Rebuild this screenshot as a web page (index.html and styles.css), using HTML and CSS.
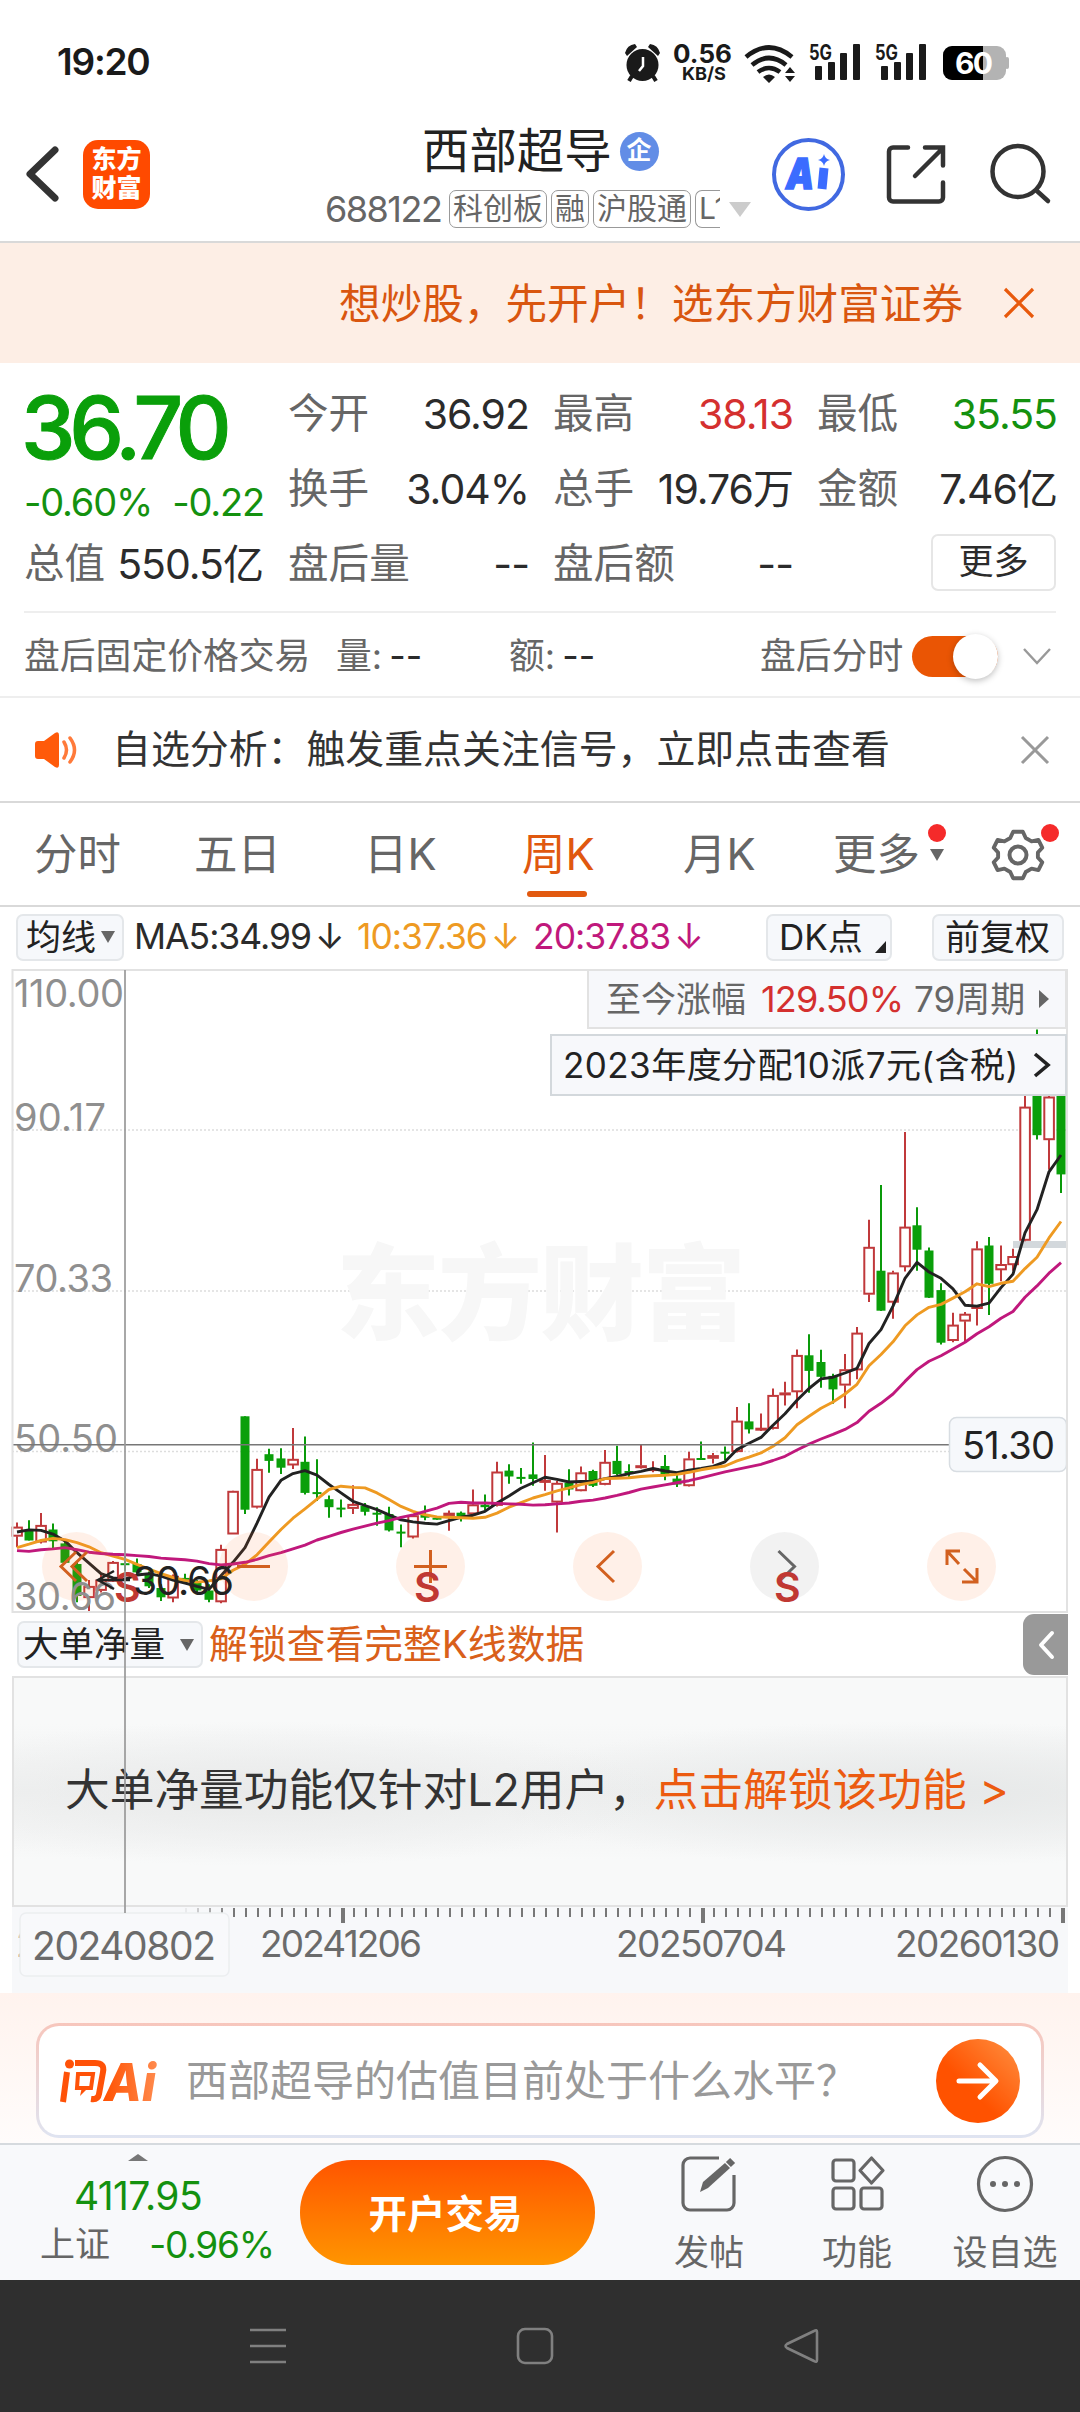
FILE: index.html
```
<!DOCTYPE html>
<html lang="zh-CN">
<head>
	<meta charset="UTF-8">
	<title>西部超导 688122</title>
	<link rel="stylesheet" href="styles.css">
</head>
<body>
	<div class="status">
		<span class="time">19:20</span>
		<svg class="status-icons" width="380" height="60" viewBox="640 30 380 60">
			<g fill="#1a1a1a">
				<circle cx="642.5" cy="65" r="16"/>
				<path d="M625 53a12 12 0 0 1 10-9l2 3-10 9zM660 53a12 12 0 0 0-10-9l-2 3 10 9z"/>
				<path d="M632 76l-3 5M653 76l3 5" stroke="#1a1a1a" stroke-width="4"/>
				<path d="M643 57v9l-4 5" stroke="#fff" stroke-width="2.5" fill="none"/>
				<text x="673" y="63" font-size="26" font-weight="700" textLength="59">0.56</text>
				<text x="682" y="80" font-size="18" font-weight="700" textLength="44" lengthAdjust="spacingAndGlyphs">KB/S</text>
				<g fill="none" stroke="#1a1a1a" stroke-width="4.6">
					<path d="M746 57q23-19 46 0M752 65q17-14 34 0M758 72q11-8 22 0"/>
				</g>
				<path d="M763 77q6-5 12 0l-6 6zM785 73l5-6 5 6zM785 76h10l-5 6z"/>
				<text x="809" y="60" font-size="21" font-weight="700" textLength="23" lengthAdjust="spacingAndGlyphs">5G</text>
				<text x="875" y="60" font-size="21" font-weight="700" textLength="23" lengthAdjust="spacingAndGlyphs">5G</text>
				<rect x="815" y="66" width="7" height="14" rx="1"/><rect x="828" y="62" width="7" height="18" rx="1"/><rect x="840" y="53" width="7" height="27" rx="1"/><rect x="853" y="44" width="7" height="36" rx="1"/>
				<rect x="881" y="66" width="7" height="14" rx="1"/><rect x="894" y="62" width="7" height="18" rx="1"/><rect x="906" y="53" width="7" height="27" rx="1"/><rect x="919" y="44" width="7" height="36" rx="1"/>
			</g>
			<rect x="943" y="46" width="63" height="34" rx="9" fill="#b3b3b3"/>
			<rect x="1005" y="57" width="4" height="12" rx="2" fill="#b3b3b3"/>
			<path d="M983 46h-31a9 9 0 0 0-9 9v16a9 9 0 0 0 9 9h31z" fill="#000"/>
			<text x="955" y="74" font-size="30" font-weight="700" fill="#fff" textLength="38">60</text>
		</svg>
	</div>

	<div class="header">
		<svg class="back" width="36" height="60" viewBox="0 0 36 60"><path d="M30 6L5 30l25 24" fill="none" stroke="#333" stroke-width="7" stroke-linecap="round" stroke-linejoin="round"/></svg>
		<div class="logo">东方<br>财富</div>
		<div class="title">
			<div class="name">西部超导<span class="qi">企</span></div>
			<div class="tags">
				<span class="code">688122</span>
				<span class="tag">科创板</span>
				<span class="tag">融</span>
				<span class="tag">沪股通</span>
				<span class="tag cut">L1</span>
				<i class="tri"></i>
			</div>
		</div>
		<svg class="tools" width="290" height="80" viewBox="768 134 290 80" fill="none" stroke="#333" stroke-width="4.5">
			<circle cx="808.500" cy="174.500" r="34.500" stroke="#4169e1" stroke-width="4"/>
			<text x="786" y="189" font-size="42" font-weight="900" font-style="italic" fill="#3b6cff" stroke="#3b6cff" stroke-width="1.500" textLength="28" lengthAdjust="spacingAndGlyphs">A</text>
			<path d="M824 168l-2 21" stroke="#3b6cff" stroke-width="9"/>
			<path d="M824 154q1 5 6 6-5 1-6 6-1-5-6-6 5-1 6-6z" fill="#3b6cff" stroke="none"/>
			<path d="M908 147.500h-15a4 4 0 0 0-4 4v46a4 4 0 0 0 4 4h46a4 4 0 0 0 4-4v-15M925 147.500h18v18M942 149l-27 27" stroke-linecap="round"/>
			<circle cx="1018" cy="171.500" r="25.500"/>
			<path d="M1037 191l11 10" stroke-linecap="round"/>
		</svg>
	</div>

	<div class="banner">
		<span>想炒股，先开户！选东方财富证券</span>
		<svg width="34" height="34" viewBox="0 0 34 34"><path d="M3 3l28 28M31 3L3 31" stroke="#e8590c" stroke-width="3.200"/></svg>
	</div>

	<div class="quote">
		<div class="price-col">
			<div class="price">36.70</div>
			<div class="change"><span>-0.60%</span><span>-0.22</span></div>
			<div class="cell cap"><label>总值</label><b>550.5亿</b></div>
		</div>
		<div class="grid">
			<div class="cell"><label>今开</label><b>36.92</b></div>
			<div class="cell"><label>最高</label><b class="red">38.13</b></div>
			<div class="cell"><label>最低</label><b class="green">35.55</b></div>
			<div class="cell"><label>换手</label><b>3.04%</b></div>
			<div class="cell"><label>总手</label><b>19.76万</b></div>
			<div class="cell"><label>金额</label><b>7.46亿</b></div>
			<div class="cell"><label>盘后量</label><b>--</b></div>
			<div class="cell"><label>盘后额</label><b>--</b></div>
			<div class="cell end"><span class="more-btn">更多</span></div>
		</div>
	</div>

	<div class="after">
		<span class="after-title">盘后固定价格交易</span>
		<span class="after-vol">量: <b>--</b></span>
		<span class="after-amt">额: <b>--</b></span>
		<span>盘后分时</span>
		<i class="switch"></i>
		<svg width="30" height="20" viewBox="0 0 30 20"><path d="M2 2l13 14L28 2" fill="none" stroke="#999" stroke-width="2.400"/></svg>
	</div>

	<div class="notice">
		<svg width="46" height="38" viewBox="0 0 46 38"><path d="M2 13q0-3 3-3h6l11-8q4-2 4 2v30q0 4-4 2l-11-8H5q-3 0-3-3z" fill="#ff5a0a"/><path d="M31 11q5 8 0 16M37 7q9 12 0 24" fill="none" stroke="#ff7a3a" stroke-width="3.500" stroke-linecap="round"/></svg>
		<span>自选分析：触发重点关注信号，立即点击查看</span>
		<svg width="30" height="30" viewBox="0 0 30 30"><path d="M2 2l26 26M28 2L2 28" stroke="#999" stroke-width="3"/></svg>
	</div>

	<div class="tabs">
		<span>分时</span>
		<span>五日</span>
		<span>日K</span>
		<span class="on">周K</span>
		<span>月K</span>
		<span class="more">更多<i class="arrow"></i><i class="dot"></i></span>
		<span class="gear">
			<svg width="52" height="54" viewBox="-26 -27 52 54" fill="none" stroke="#666" stroke-width="4" stroke-linejoin="round">
				<path d="M-5-24H5L8-17.500 14-14 21-15.500 25-7.500 20.500-2.500V2.500L25 7.500 21 15.500 14 14 8 17.500 5 24H-5L-8 17.500-14 14-21 15.500-25 7.500-20.500 2.500V-2.500L-25-7.500-21-15.500-14-14-8-17.500Z" transform="scale(.97)"/>
				<circle r="8.500"/>
			</svg>
			<i class="dot"></i>
		</span>
	</div>

	<div class="ma">
		<span class="btn">均线<i class="arrow"></i></span>
		<span class="ma5">MA5:34.99<em>↓</em></span>
		<span class="ma10">10:37.36<em>↓</em></span>
		<span class="ma20">20:37.83<em>↓</em></span>
		<span class="btn dk">DK点<i></i></span>
		<span class="btn fq">前复权</span>
	</div>

	<div class="chart-area">
		<svg class="kline" width="1056" height="644" viewBox="12 0 1056 644">
			<path d="M12 161H1067M12 322H1067M12 482.500H1067" stroke="#ddd" stroke-width="1.500" stroke-dasharray="2 2"/>
			<text class="mark" x="336" y="363" textLength="410">东方财富</text>
			<g class="axis">
				<text x="14" y="38" textLength="110">110.00</text>
				<text x="14" y="162" textLength="92">90.17</text>
				<text x="14" y="323" textLength="99">70.33</text>
				<text x="14" y="483" textLength="104">50.50</text>
			</g>
			<rect x="1013" y="272" width="54" height="7" fill="#d3d8dc"/>
			<g id="candles"></g>
			<g id="lines" fill="none" stroke-width="2.900" stroke-linejoin="round"></g>
			<path d="M12 475.700H1067" stroke="#777" stroke-width="1.500"/>
			<g id="controls">
				<g class="hot"><circle cx="76.500" cy="597.500" r="34.500"/><circle cx="253.500" cy="597.500" r="34.500"/><circle cx="430.500" cy="597.500" r="34.500"/><circle cx="607.500" cy="597.500" r="34.500"/><circle cx="961.500" cy="597.500" r="34.500"/></g>
				<circle cx="784.500" cy="597.500" r="34.500" fill="#8a8a8a" fill-opacity=".11"/>
				<g fill="none" stroke="#d2601f" stroke-width="3">
					<path d="M76 583L61 597.500 76 612M87 583L72 597.500 87 612"/>
					<path d="M237 597.500h33M414 597.500h33M430.500 581v33"/>
					<path d="M614 582l-16 15.500 16 15.500"/>
					<path d="M960 582h-13v14M947 582l12 13M977 599v14h-15M977 613l-13-13"/>
				</g>
				<path d="M778.500 582l16 15.500-16 15.500" fill="none" stroke="#666" stroke-width="3"/>
			</g>
			<g class="axis"><text x="14" y="641" textLength="102">30.66</text></g>
			<g class="sell"><text x="114" y="633">S</text><text x="414" y="633">S</text><text x="774" y="633">S</text></g>
			<path d="M114 602l-16 9 16 9M98 611h32" fill="none" stroke="#222" stroke-width="2.500"/>
			<text x="133" y="626" font-size="39" fill="#222" textLength="101">30.66</text>
			<rect x="949.500" y="448.500" width="117" height="54" rx="7" fill="#f6f8fb" stroke="#d8dde2" stroke-width="1.500"/>
			<text x="962" y="490" font-size="38" fill="#222" textLength="93">51.30</text>
			<rect x="12.500" y="1" width="1054.500" height="642" fill="none" stroke="#e2e2e2" stroke-width="2"/>
		</svg>
		<div class="tip gain"><span>至今涨幅</span><b>129.50%</b><span>79周期</span><i></i></div>
		<div class="tip dividend"><span>2023年度分配10派7元(含税)</span><svg width="18" height="26" viewBox="0 0 18 26"><path d="M2 2l13 11L2 24" fill="none" stroke="#222" stroke-width="3.600"/></svg></div>

		<div class="sub">
			<span class="btn">大单净量<i class="arrow"></i></span>
			<span class="unlock">解锁查看完整K线数据</span>
			<span class="handle"><svg width="18" height="32" viewBox="0 0 18 32"><path d="M15 4L4 16l11 12" fill="none" stroke="#fff" stroke-width="4" stroke-linecap="round" stroke-linejoin="round"/></svg></span>
		</div>
		<div class="locked">
			<span>大单净量功能仅针对L2用户，</span><a>点击解锁该功能 &gt;</a>
		</div>
		<svg class="dates" width="1056" height="86" viewBox="12 0 1056 86">
			<g id="ticks" fill="#777"></g>
			<text x="16" y="50">2</text>
			<text x="260" y="50" textLength="162">20241206</text>
			<text x="616" y="50" textLength="171">20250704</text>
			<text x="895" y="50" textLength="165">20260130</text>
			<rect x="20" y="6" width="209" height="63" rx="6" fill="#f8f9fb" stroke="#eceef0" stroke-width="1.500"/>
			<text class="current" x="32" y="53" textLength="184">20240802</text>
		</svg>
		<i class="cross"></i>
	</div>

	<div class="ask">
		<div class="ask-box">
			<svg width="100" height="50" viewBox="58 2055 100 50">
				<defs><linearGradient id="fire"><stop offset="0" stop-color="#ff5000"/><stop offset="1" stop-color="#ff8a4d"/></linearGradient></defs>
				<g fill="none" stroke="#ff5208" stroke-width="6">
					<path d="M67 2071l-4 30M75 2062h20q10 0 8 9l-4 22q-1 6-8 5"/>
					<path d="M78 2073h15l-2 14h-14z" stroke-width="4"/>
				</g>
				<circle cx="69.500" cy="2063" r="4.500" fill="#ff5208"/>
				<path d="M82 2086l-2 9 9-9" fill="#ff5208"/>
				<text x="104" y="2100" font-size="52" font-weight="800" font-style="italic" fill="url(#fire)" textLength="52" lengthAdjust="spacingAndGlyphs">Ai</text>
			</svg>
			<span class="hint">西部超导的估值目前处于什么水平？</span>
			<span class="go"><svg width="44" height="38" viewBox="0 0 44 38"><path d="M3 19h36M24 3l16 16-16 16" fill="none" stroke="#fff" stroke-width="5" stroke-linecap="round" stroke-linejoin="round"/></svg></span>
		</div>
	</div>

	<div class="bottom">
		<div class="index">
			<i class="up"></i>
			<b>4117.95</b>
			<p><span>上证</span><b>-0.96%</b></p>
		</div>
		<div class="open">开户交易</div>
		<div class="act">
			<svg width="60" height="60" viewBox="0 0 60 60" fill="none" stroke="#666" stroke-width="3.200"><path d="M40 4H11a7 7 0 0 0-7 7v38a7 7 0 0 0 7 7h37a7 7 0 0 0 7-7V21"/><path d="M21 38l3-10L46 9l5 5-22 20z" fill="#666" stroke="none"/><path d="M49 6l5 5" stroke-width="6"/></svg>
			<span>发帖</span>
		</div>
		<div class="act">
			<svg width="60" height="60" viewBox="0 0 60 60" fill="none" stroke="#666" stroke-width="3.200"><rect x="6" y="6" width="21" height="21" rx="3"/><rect x="6" y="34" width="21" height="21" rx="3"/><rect x="34" y="34" width="21" height="21" rx="3"/><path d="M44.500 4L56 16.500 44.500 29 33 16.500z" stroke-linejoin="round"/></svg>
			<span>功能</span>
		</div>
		<div class="act">
			<svg width="60" height="60" viewBox="0 0 60 60" fill="#666"><circle cx="30" cy="30" r="26.500" fill="none" stroke="#666" stroke-width="3.200"/><circle cx="18" cy="30" r="3"/><circle cx="30" cy="30" r="3"/><circle cx="42" cy="30" r="3"/></svg>
			<span>设自选</span>
		</div>
	</div>

	<div class="navbar">
		<svg width="38" height="38" viewBox="0 0 38 38"><path d="M1 3h36M1 19h36M1 35h36"/></svg>
		<svg width="38" height="38" viewBox="0 0 38 38"><rect x="2" y="2" width="34" height="34" rx="7"/></svg>
		<svg width="38" height="38" viewBox="0 0 38 38"><path d="M34 5v28q0 3-3 1L4 21q-3-2 0-4L31 4q3-2 3 1z"/></svg>
	</div>

	<script src="chart.js"></script>
</body>
</html>
```

FILE: chart.js
```
// up/down, high, body top, body bottom, low
const candles = [
	['r',1338,1349,1371,1397],['g',1333,1357,1381,1381],['r',1316,1345,1385,1388],['g',1341,1355,1383,1400],
	['g',1378,1388,1434,1434],['g',1430,1437,1513,1528],['r',1475,1490,1517,1553],['r',1460,1475,1500,1505],
	['r',1430,1433,1478,1480],['g',1415,1435,1437,1453],['g',1424,1437,1457,1460],['g',1455,1460,1490,1494],
	['g',1485,1494,1516,1525],['r',1462,1466,1518,1528],['g',1460,1470,1473,1483],['g',1475,1480,1500,1505],
	['g',1485,1500,1522,1528],['r',1391,1402,1527,1530],['r',1263,1264,1366,1366],['g',1086,1086,1308,1318],
	['r',1187,1212,1302,1305],['g',1163,1176,1192,1220],['g',1162,1186,1208,1223],['r',1114,1188,1202,1211],
	['g',1134,1194,1268,1272],['g',1188,1266,1269,1287],['g',1274,1283,1302,1327],['g',1284,1303,1305,1326],
	['r',1250,1295,1305,1318],['g',1292,1299,1313,1322],['g',1302,1315,1319,1346],['g',1301,1318,1357,1360],
	['g',1343,1360,1364,1397],['r',1318,1322,1373,1376],['g',1298,1320,1327,1333],['g',1325,1327,1331,1332],
	['r',1310,1316,1323,1358],['g',1312,1315,1325,1336],['r',1260,1296,1318,1320],['g',1272,1296,1302,1310],
	['r',1194,1218,1298,1300],['g',1200,1215,1229,1246],['g',1209,1230,1233,1246],['g',1148,1224,1235,1251],
	['r',1178,1238,1241,1263],['r',1240,1245,1290,1362],['g',1212,1244,1260,1274],['r',1205,1220,1263,1264],
	['g',1213,1216,1251,1254],['r',1166,1195,1248,1250],['g',1156,1192,1223,1226],['g',1200,1216,1219,1232],
	['r',1154,1203,1207,1210],['r',1193,1210,1212,1219],['g',1178,1204,1224,1238],['g',1220,1234,1248,1254],
	['r',1170,1187,1251,1253],['g',1146,1185,1188,1190],['r',1173,1179,1186,1198],['g',1158,1170,1173,1190],
	['r',1064,1097,1170,1172],['g',1055,1098,1117,1127],['r',1079,1114,1118,1121],['r',1020,1036,1115,1117],
	['r',1004,1030,1033,1060],['r',927,941,1028,1067],['g',891,941,978,1030],['g',928,957,992,1018],
	['g',985,990,1022,1056],['r',938,975,1012,1067],['r',874,888,976,998],['r',619,684,796,814],
	['g',536,740,835,836],['r',740,745,815,854],['r',410,636,731,742],['g',589,632,690,740],
	['g',685,692,804,805],['g',770,786,911,915],['r',840,869,906,910],['r',838,843,860,910],
	['r',670,688,830,870],['g',660,680,771,845],['r',680,725,738,765],['r',688,706,726,740],
	['r',300,351,668,670],['g',167,200,418,428],['r',315,327,429,500],['g',250,300,511,555]
];
const averages = {
	'#222': [1361,1356,1357,1366,1382,1410,1435,1460,1470,1473,1463,1460,1466,1475,1482,1490,1497,1465,1433,1398,1340,1278,1238,1222,1215,1226,1248,1268,1288,1298,1308,1320,1332,1337,1340,1342,1334,1326,1321,1312,1292,1275,1257,1244,1231,1236,1242,1241,1241,1234,1229,1222,1217,1210,1216,1220,1214,1210,1205,1194,1165,1150,1136,1107,1080,1048,1020,997,993,983,972,913,880,824,758,720,743,758,783,822,824,817,780,748,650,595,505,465],
	'#ee9a22': [1398,1390,1381,1376,1379,1386,1396,1410,1418,1426,1438,1449,1460,1469,1476,1480,1477,1472,1452,1438,1415,1385,1355,1328,1306,1283,1260,1252,1255,1256,1268,1284,1300,1312,1320,1325,1326,1327,1328,1326,1316,1302,1291,1280,1272,1263,1256,1248,1243,1234,1233,1232,1229,1227,1226,1224,1219,1213,1208,1204,1192,1183,1173,1157,1137,1106,1086,1067,1052,1033,1010,966,939,909,871,845,827,820,805,790,771,778,770,765,735,708,662,623],
	'#c0187c': [1405,1407,1403,1401,1398,1403,1409,1412,1414,1415,1417,1419,1423,1425,1427,1430,1436,1439,1437,1433,1426,1417,1410,1401,1392,1380,1371,1362,1354,1347,1340,1334,1326,1320,1312,1304,1293,1290,1292,1292,1293,1294,1295,1297,1296,1294,1292,1288,1285,1280,1274,1267,1259,1254,1249,1244,1239,1232,1225,1218,1212,1206,1200,1191,1181,1166,1152,1140,1129,1117,1101,1074,1055,1033,1003,975,955,942,926,910,890,873,853,837,803,776,746,721]
};
const x = i => 17 + i * 12;
const y = v => +((v - 23) * 643 / 1528).toFixed(1);

let html = '';
candles.forEach(([c, hi, top, bot, lo], i) => {
	const h = y(bot) - y(top);
	if (c === 'g') {
		html += `<path d="M${x(i)} ${y(hi)}V${y(lo)}" stroke="#0a9a0a" stroke-width="2"/>`;
		html += `<rect x="${x(i) - 4.5}" y="${y(top)}" width="9" height="${Math.max(h, 2)}" fill="#0a9f0a"/>`;
	} else {
		html += `<path d="M${x(i)} ${y(hi)}V${y(top)}M${x(i)} ${y(bot)}V${y(lo)}" stroke="#c0393b" stroke-width="2"/>`;
		html += `<rect x="${x(i) - 4.7}" y="${y(top) + 0.6}" width="9.6" height="${Math.max(h - 1.2, 1)}" fill="#fff" stroke="#c0393b" stroke-width="2"/>`;
	}
});
document.getElementById('candles').innerHTML = html;

html = '';
for (const color in averages) {
	html += `<polyline stroke="${color}" points="${averages[color].map((v, i) => x(i) + ',' + y(v)).join(' ')}"/>`;
}
document.getElementById('lines').innerHTML = html;

html = '';
for (let i = 0; i < 74; i++) {
	const major = [13, 43, 73].includes(i);
	html += `<rect x="${185 + i * 12}" y="1" width="${major ? 4 : 2}" height="${major ? 15 : 9}" opacity="${Math.min(1, 0.1 + i * 0.25)}"/>`;
}
document.getElementById('ticks').innerHTML = html;
```

FILE: styles.css
```
* {
	box-sizing: border-box;
}
body {
	margin: 0;
	width: 1080px;
	height: 2412px;
	overflow: hidden;
	background: #fff;
	color: #2b2b2b;
	font-family: Inter, "Noto Sans CJK SC", sans-serif;
	font-weight: 400;
	line-height: 1;
	white-space: nowrap;
}
b {
	font-weight: 400;
}
i, em {
	font-style: normal;
}
svg {
	display: block;
	flex: none;
	overflow: visible;
}
.green { color: #14910f; }
.red { color: #d4302f; }

/* status bar */
.status {
	height: 120px;
	padding: 0 60px 0 57px;
	display: flex;
	align-items: center;
	justify-content: space-between;
}
.time {
	padding-top: 3px;
	font-size: 37px;
	font-weight: 600;
	color: #1a1a1a;
	letter-spacing: -1.2px;
}

/* header */
.header {
	height: 123px;
	border-bottom: 2px solid #d9d9d9;
	display: flex;
	padding-left: 25px;
}
.back {
	margin-top: 24px;
}
.logo {
	width: 67px;
	height: 69px;
	margin: 20px 0 0 22px;
	padding-top: 5px;
	border-radius: 15px;
	background: #ff4a00;
	color: #fff;
	font-size: 25px;
	font-weight: 900;
	line-height: 29px;
	text-align: center;
}
.title {
	width: 428px;
	margin-left: 175px;
}
.name {
	height: 60px;
	padding: 2px 0 0 97px;
	font-size: 47.4px;
	line-height: 56px;
	display: flex;
	align-items: center;
	color: #222;
}
.qi {
	width: 39px;
	height: 39px;
	margin-left: 8px;
	border-radius: 50%;
	background: #628de6;
	color: #fff;
	font-size: 25px;
	font-weight: 700;
	line-height: 37px;
	text-align: center;
}
.tags {
	display: flex;
	align-items: center;
	margin-top: 10px;
	height: 38px;
	color: #666;
	font-size: 30px;
}
.code {
	width: 124px;
	font-size: 36px;
	letter-spacing: -1.5px;
}
.tag {
	height: 38px;
	margin-right: 4px;
	padding: 0 3px;
	border: 1.5px solid #999;
	border-radius: 7px;
	line-height: 34px;
}
.cut {
	width: 25px;
	margin-right: 9px;
	border-right: 0;
	border-radius: 7px 0 0 7px;
	overflow: hidden;
}
.tri {
	border: 11px solid transparent;
	border-top: 15px solid #ccc;
	border-bottom: 0;
}
.tools {
	margin: 14px 0 0 15px;
}

.banner {
	height: 120px;
	padding: 0 44px 0 0;
	background: #fdeee5;
	color: #d9560f;
	font-size: 41.6px;
	display: flex;
	align-items: center;
	justify-content: flex-end;
	gap: 39px;
}
.banner span {
	padding-top: 3px;
}

/* quote */
.quote {
	height: 250px;
	margin: 0 24px;
	border-bottom: 2px solid #eee;
	display: flex;
}
.price-col {
	width: 264px;
	padding: 22px 0 0 0;
}
.price {
	height: 85px;
	margin-left: -3px;
	font-size: 87px;
	font-weight: 500;
	line-height: 85px;
	letter-spacing: -6.3px;
	-webkit-text-stroke: 1px #0a9f0a;
	color: #0a9f0a;
}
.change {
	height: 58px;
	display: flex;
	align-items: center;
	justify-content: space-between;
	width: 240px;
	margin-top: 3px;
	font-size: 38px;
	letter-spacing: -1.2px;
	color: #14910f;
}
.grid {
	width: 768px;
	margin-top: 14px;
	display: grid;
	grid-template-columns: 240px 239px 239px;
	grid-auto-rows: 75px;
	column-gap: 25px;
}
.cell {
	display: flex;
	align-items: center;
	justify-content: space-between;
	font-size: 41px;
}
.cell label {
	color: #666;
	font-size: 40.6px;
}
.cell b {
	letter-spacing: -1px;
	margin-right: -1px;
}
.cell.cap {
	width: 238px;
	height: 75px;
	margin-top: -4px;
}
.cell.end {
	justify-content: flex-end;
}
.more-btn {
	width: 125px;
	height: 57px;
	margin: -5px 0 0;
	border: 2px solid #e6e6e6;
	border-radius: 7px;
	font-size: 35px;
	line-height: 51px;
	text-align: center;
}

.after {
	height: 85px;
	padding: 4px 27px 0 24px;
	border-bottom: 2px solid #eee;
	color: #666;
	font-size: 35.8px;
	display: flex;
	align-items: center;
}
.after b {
	margin-left: -3px;
	color: #2b2b2b;
}
.after-title { width: 312px; }
.after-vol { width: 173px; }
.after-amt { width: 251px; }
.switch {
	width: 86px;
	height: 41px;
	margin: 0 24px 0 9px;
	border-radius: 21px;
	background: #ea5504;
	position: relative;
}
.switch::after {
	content: "";
	position: absolute;
	right: 0;
	top: -2px;
	width: 45px;
	height: 45px;
	border-radius: 50%;
	background: #fff;
	box-shadow: 0 2px 6px rgba(0,0,0,.25);
}

.notice {
	height: 105px;
	padding: 0 30px 0 33px;
	border-bottom: 2px solid #d9d9d9;
	display: flex;
	align-items: center;
	font-size: 38.9px;
	color: #333;
}
.notice span {
	width: 908px;
	margin-left: 33px;
}

/* period tabs */
.tabs {
	height: 104px;
	padding-left: 34px;
	border-bottom: 2px solid #d9d9d9;
	display: grid;
	grid-template-columns: 160px 170px 158px 161px 150px 159px 60px;
	align-items: center;
	font-size: 43.4px;
	color: #666;
}
.tabs span {
	position: relative;
	top: 1px;
}
.tabs .on {
	color: #e0580f;
}
.tabs .on::after {
	content: "";
	position: absolute;
	left: 5px;
	top: 58px;
	width: 60px;
	height: 6px;
	border-radius: 3px;
	background: #e2590f;
}
.arrow {
	display: inline-block;
	border: 7px solid transparent;
	border-top: 12px solid #666;
	border-bottom: 0;
}
.more .arrow {
	position: absolute;
	left: 97px;
	top: 16px;
}
.dot {
	position: absolute;
	width: 18px;
	height: 18px;
	border-radius: 50%;
	background: #f52a2a;
	left: 95px;
	top: -9px;
}
.gear .dot {
	left: 49px;
	top: -4px;
}

.ma {
	height: 62px;
	padding: 0 16px 2px;
	display: flex;
	align-items: center;
	font-size: 35.5px;
	letter-spacing: -1px;
}
.ma em {
	margin-left: 4px;
}
.btn {
	height: 47px;
	border: 2px solid #e4e7ea;
	border-radius: 7px;
	background: #f6f8fb;
	color: #222;
	font-size: 35px;
	line-height: 41px;
	letter-spacing: 0;
	padding-left: 8px;
	display: flex;
	align-items: center;
}
.ma .btn { width: 108px; }
.ma .btn .arrow { margin-left: 5px; }
.ma5 { width: 223px; margin-left: 10px; }
.ma10 { width: 176px; color: #ee9a22; }
.ma20 { width: 233px; color: #c0187c; }
.ma .dk {
	width: 126px;
	padding-left: 11px;
}
.dk i {
	margin: 20px 0 0 12px;
	border-left: 11px solid transparent;
	border-bottom: 12px solid #222;
}
.ma .fq {
	width: 132px;
	margin-left: 40px;
	padding-left: 11px;
}

/* k line */
.chart-area {
	position: relative;
	width: 1056px;
	margin-left: 12px;
}
.axis text {
	font-size: 38px;
	fill: #8f8f8f;
}
.mark {
	font-size: 104px;
	font-weight: 900;
	fill: #f7f7f7;
}
.hot {
	fill: #ff7a30;
	fill-opacity: .11;
}
.sell {
	font-size: 41px;
	font-weight: 600;
	fill: #c03833;
}
.tip {
	position: absolute;
	right: 1px;
	background: #f7f8fb;
	display: flex;
	align-items: center;
	font-size: 35px;
	color: #666;
}
.gain {
	top: 0;
	width: 480px;
	height: 60px;
	padding-left: 17px;
	border: 2px solid #e2e2e2;
}
.gain b {
	width: 153px;
	margin-left: 15px;
	font-size: 36px;
	letter-spacing: -.8px;
	color: #d4302f;
}
.gain i {
	margin-left: 14px;
	border: 9px solid transparent;
	border-left: 10px solid #666;
	border-right: 0;
}
.dividend {
	top: 65px;
	width: 517px;
	height: 62px;
	padding-left: 11px;
	border: 2px solid #d3d8dc;
	color: #222;
}
.dividend span {
	width: 470px;
	letter-spacing: .45px;
}
.cross {
	position: absolute;
	left: 112px;
	top: 1px;
	width: 2px;
	height: 943px;
	background: #999;
	opacity: .85;
}
.sub {
	height: 63px;
	padding-left: 5px;
	display: flex;
	align-items: center;
}
.sub .btn {
	width: 186px;
	padding-left: 4px;
	font-size: 35.5px;
}
.sub .arrow {
	margin-left: 15px;
}
.unlock {
	width: 820px;
	padding-left: 6px;
	font-size: 38.8px;
	color: #d9601a;
}
.handle {
	flex: none;
	width: 45px;
	height: 61px;
	border-radius: 11px 0 0 11px;
	background: #999;
	display: flex;
	align-items: center;
	justify-content: center;
}
.locked {
	height: 231px;
	border: 2px solid #e2e2e2;
	padding: 0 0 2px 51px;
	display: flex;
	align-items: center;
	font-size: 44.7px;
	color: #333;
	background: radial-gradient(ellipse 38% 32% at 24% 51%, #e9eaea 0%, rgba(233,234,234,0) 100%), radial-gradient(ellipse 42% 32% at 86% 51%, #e6e8e8 0%, rgba(233,234,234,0) 100%), linear-gradient(#f8f9f9 20%, #f0f1f1 50%, #f8f9f9 80%);
}
.locked a {
	color: #ec5b10;
}
.dates {
	background: #f7f8fa;
}
.dates text {
	font-size: 37px;
	fill: #6b6b6b;
}
.dates .current {
	font-size: 39px;
}

/* ask */
.ask {
	height: 150px;
	padding: 30px 36px 0;
	background: linear-gradient(#fff3ee, #fffcfb);
}
.ask-box {
	height: 115px;
	padding-left: 19px;
	border: 3px solid transparent;
	border-radius: 23px;
	background: linear-gradient(#fff, #fff) padding-box, linear-gradient(#f7c6bc, #dfe4f1) border-box;
	display: flex;
	align-items: center;
}
.hint {
	width: 720px;
	margin-left: 28px;
	font-size: 42px;
	color: #999;
}
.go {
	width: 84px;
	height: 84px;
	margin-left: 30px;
	border-radius: 50%;
	background: linear-gradient(225deg, #ff9142, #ff5200 60%);
	display: flex;
	align-items: center;
	justify-content: center;
}

.bottom {
	height: 137px;
	border-top: 2px solid #d6dade;
	background: #f8f9fb;
	display: flex;
}
.index {
	width: 276px;
	padding-top: 9px;
	text-align: center;
	color: #14910f;
	font-size: 39px;
	letter-spacing: -.6px;
}
.index .up {
	display: block;
	width: 0;
	margin: 0 auto 15px;
	border: 10px solid transparent;
	border-bottom: 7px solid #777;
	border-top: 0;
}
.index p {
	margin: 11px 0 0 40px;
	display: flex;
	align-items: center;
	justify-content: space-between;
	padding-right: 2px;
	font-size: 37px;
	letter-spacing: -1.2px;
}
.index p span {
	color: #666;
	font-size: 35px;
	letter-spacing: 0;
}
.open {
	width: 295px;
	height: 105px;
	margin: 15px 40px 0 24px;
	padding-right: 4px;
	border-radius: 52px;
	background: linear-gradient(#ff5500, #ff9500);
	color: #fff;
	font-size: 38.5px;
	font-weight: 700;
	line-height: 108px;
	text-align: center;
}
.act {
	width: 148px;
	padding-top: 9px;
	display: flex;
	flex-direction: column;
	align-items: center;
	gap: 21px;
	font-size: 35px;
	color: #666;
}

.navbar {
	height: 132px;
	padding: 0 259px 0 249px;
	background: #2f2f2f;
	display: flex;
	align-items: center;
	justify-content: space-between;
}
.navbar svg {
	fill: none;
	stroke: #808080;
	stroke-width: 2.6;
}
```
